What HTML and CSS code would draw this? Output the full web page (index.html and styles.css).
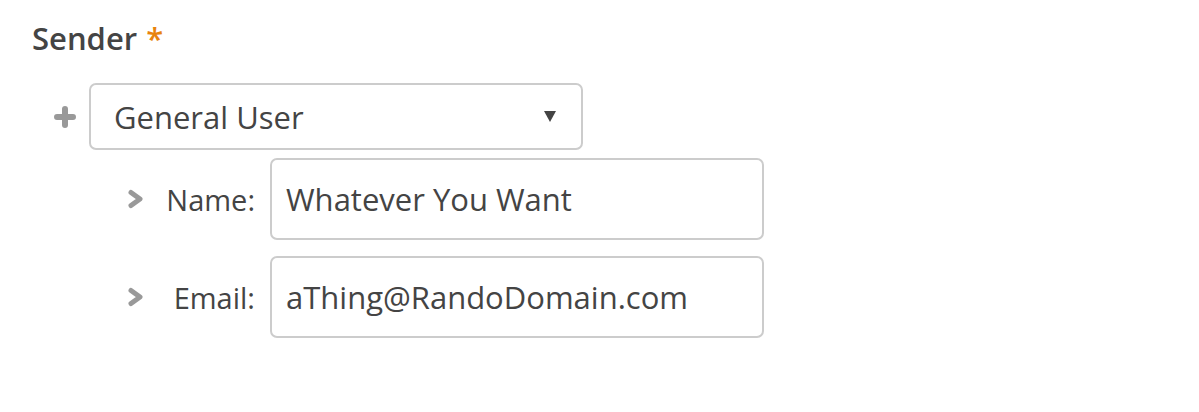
FILE: index.html
```html
<!DOCTYPE html>
<html>
<head>
<meta charset="utf-8">
<link rel="stylesheet" href="styles.css">
</head>
<body>
<div class="field">
  <div class="field-label">Sender <span class="req">*</span></div>
  <div class="select-row">
    <svg class="plus" width="24" height="22" viewBox="0 0 24 22"><path d="M12 3v16M4 11h16" stroke="#999" stroke-width="6" stroke-linecap="round"/></svg>
    <div class="select"><span>General User</span><span class="caret"></span></div>
  </div>
  <div class="sub-row">
    <svg class="chev" width="19" height="20" viewBox="0 0 19 20"><path d="M5 3.5l9 6.5-9 6.5" fill="none" stroke="#999" stroke-width="5" stroke-linejoin="round" stroke-linecap="round"/></svg>
    <label class="sub-label">Name:</label>
    <input class="text-input" type="text" value="Whatever You Want">
  </div>
  <div class="sub-row">
    <svg class="chev" width="19" height="20" viewBox="0 0 19 20"><path d="M5 3.5l9 6.5-9 6.5" fill="none" stroke="#999" stroke-width="5" stroke-linejoin="round" stroke-linecap="round"/></svg>
    <label class="sub-label">Email:</label>
    <input class="text-input" type="text" value="aThing@RandoDomain.com">
  </div>
</div>
</body>
</html>
```
FILE: styles.css
```css
html, body {
  margin: 0;
  background: #fff;
}
body {
  font-family: "Open Sans", "Liberation Sans", sans-serif;
  color: #444;
}
.field {
  padding: 17px 0 0 32px;
  display: flex;
  flex-direction: column;
}
.field-label {
  font-family: "Open Sans", sans-serif;
  font-weight: 600;
  font-size: 31px;
  line-height: 42px;
  color: #444;
}
.req {
  color: #e8830c;
  margin-left: 1px;
}
.select-row {
  display: flex;
  align-items: center;
  margin-top: 24px;
  padding-left: 21px;
  gap: 12px;
}
.plus {
  display: block;
}
.select {
  box-sizing: border-box;
  width: 494px;
  height: 67px;
  border: 2px solid #ccc;
  border-radius: 7px;
  display: flex;
  align-items: center;
  justify-content: space-between;
  padding: 0 25px 0 23px;
  font-family: "Open Sans", sans-serif;
  font-size: 31px;
  color: #444;
}
.caret {
  width: 0;
  height: 0;
  border-left: 6px solid transparent;
  border-right: 6px solid transparent;
  border-top: 11px solid #444;
}
.sub-row {
  display: flex;
  align-items: center;
  padding-left: 94px;
  margin-top: 8px;
}
.sub-row + .sub-row {
  margin-top: 16px;
}
.chev {
  display: block;
}
.sub-label {
  width: 125px;
  text-align: right;
  font-size: 29px;
  color: #444;
  padding-right: 15px;
  box-sizing: border-box;
}
.text-input {
  box-sizing: border-box;
  width: 494px;
  height: 82px;
  border: 2px solid #ccc;
  border-radius: 7px;
  padding: 0 14px;
  font-family: "Open Sans", sans-serif;
  font-size: 31px;
  color: #444;
  outline: none;
  margin: 0;
}
```
